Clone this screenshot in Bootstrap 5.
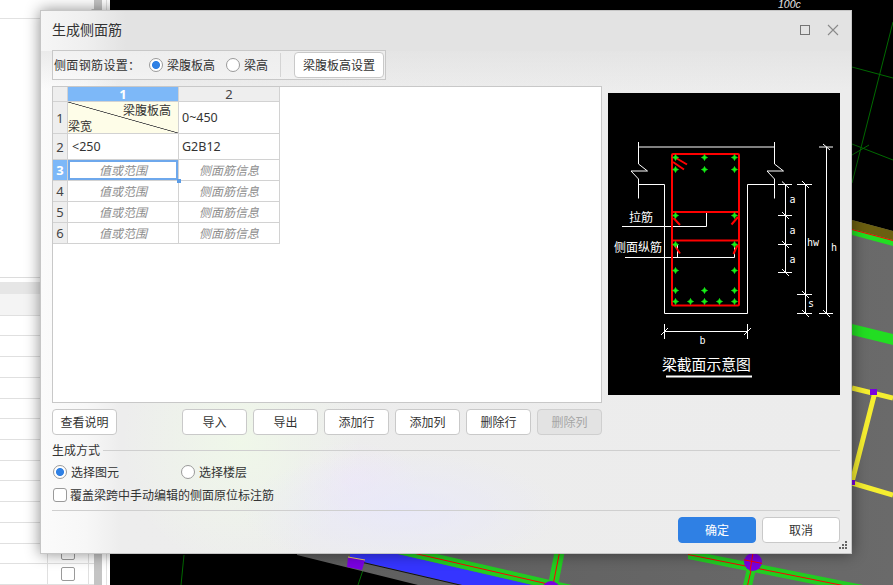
<!DOCTYPE html>
<html lang="zh">
<head>
<meta charset="utf-8">
<title>生成侧面筋</title>
<link href="https://cdn.jsdelivr.net/npm/bootstrap@5.3.0/dist/css/bootstrap.min.css" rel="stylesheet">
<style>
html,body{margin:0;height:585px;width:893px;overflow:hidden;background:#000;}
body{font-family:"Noto Sans CJK SC","Noto Sans",sans-serif;font-size:12px;color:#333;line-height:16px;}
.desk{position:relative;width:893px;height:585px;}
.side{width:110px;height:585px;background:#fff;flex:none;}
.side-table{width:94px;}
.side-search{height:19px;border-bottom:1px solid #e2e2e2;padding:4px 0 0 88px;}
.side-top{height:263px;border-bottom:1px solid #dcdcdc;}
.side-gap{height:4px;}
.side-band{height:12px;background:#e6e6e6;}
.side-head{height:22px;background:#f4f4f4;border-bottom:1px solid #e0e0e0;}
.side-row{height:21px;border-bottom:1px solid #e0e0e0;}
.side-c1{width:48px;border-right:1px solid #e0e0e0;}
.side-c2{width:41px;border-right:1px solid #e0e0e0;}
.side-box{width:14px;height:14px;border:1px solid #9a9a9a;border-radius:2px;background:#fff;}
.side-box-t{margin-top:3px;}
.side-bar{width:8px;background:#c4c4c4;}
.side-gut{width:8px;}
.side-gut i{display:block;width:1px;height:100%;margin-left:4px;background:#e2e2e2;}
.cad{flex:none;display:block;}
.dlg{position:absolute;left:40px;top:10px;width:812px;height:544px;border:1px solid #c6c6c6;
 box-shadow:0 0 14px rgba(0,0,0,.45);
 background:
  linear-gradient(to bottom,rgba(222,222,222,.55) 40px,rgba(222,222,222,0) 78px),
  radial-gradient(ellipse 160px 60px at 360px 500px,rgba(232,232,250,.85),transparent),
  radial-gradient(ellipse 120px 130px at 200px 430px,rgba(240,250,232,.8),transparent),
  radial-gradient(ellipse 70px 40px at 310px 470px,rgba(240,230,250,.6),transparent),
  linear-gradient(to right,#fbfbfb 0,#f7f7f7 45px,#ededed 80px,#ececec 100%);}
.dlg-title{height:40px;margin-bottom:-1px;padding:9px 0 0 11px;font-size:14px;line-height:18px;
 background:linear-gradient(to right,#f6f6f6 0,#efefef 45px,#e3e3e3 85px,#e3e3e3 100%);}
.dlg-ctl{position:absolute;top:13px;right:12px;}
.dlg-body{padding:0 11px;}
.setbar{width:334px;height:30px;border:1px solid #c8c8c8;padding-left:1px;background:rgba(255,255,255,.35);}
.set-label{width:95px;letter-spacing:.35px;}
.rad-ctl{width:14px;height:14px;margin:0;flex:none;background-color:#fff;border:1px solid #9a9a9a;}
.rad-ctl:checked{background-color:#fff;border-color:#9a9a9a;background-image:radial-gradient(circle,#2f80e4 0 3.6px,transparent 4.4px);}
.chk-ctl{width:14px;height:14px;margin:0 0 0 1px;flex:none;background-color:#fff;border:1px solid #9a9a9a;border-radius:2px;}
.set-sep{width:1px;height:24px;background:#d4d4d4;margin:0 13px 0 12px;}
.gap-r{margin-left:4px;}
.gap-ck{margin-left:3px;}
.gap-g1{margin-left:11px;}
.btn-pl{--bs-btn-padding-x:0;--bs-btn-padding-y:0;--bs-btn-font-size:12px;--bs-btn-line-height:24px;--bs-btn-color:#333;--bs-btn-bg:#fff;--bs-btn-border-color:#c9c9c9;--bs-btn-border-radius:4px;--bs-btn-disabled-bg:#e3e3e3;--bs-btn-disabled-border-color:#cfcfcf;--bs-btn-disabled-color:#a6a6a6;--bs-btn-disabled-opacity:1;--bs-btn-hover-bg:#fff;width:65px;height:26px;flex:none;}
.btn-wide{width:90px;}
.btn-main{--bs-btn-padding-x:0;--bs-btn-padding-y:0;--bs-btn-font-size:12px;--bs-btn-line-height:24px;--bs-btn-bg:#2f80e4;--bs-btn-border-color:#2f80e4;--bs-btn-border-radius:4px;--bs-btn-hover-bg:#2f80e4;width:78px;height:26px;}
.btn-sec{width:78px;}
.work{margin-top:6px;height:317px;}
.gridbox{width:550px;height:317px;background:#fff;border:1px solid #c8c8c8;flex:none;}
.preview{width:232px;height:302px;margin:7px 0 0 6px;flex:none;display:block;background:#000;}
.sheet{border-collapse:separate;border-spacing:0;table-layout:fixed;width:227px;font-size:12px;}
.sheet th,.sheet td{padding:0;border-right:1px solid #d2d2d2;border-bottom:1px solid #d2d2d2;vertical-align:middle;font-weight:400;line-height:14px;}
.sheet .hd{background:#eee;text-align:center;font-family:"Noto Sans",sans-serif;font-size:13px;color:#444;}
.sheet .hd-on{background:#7db8f8;color:#fff;font-weight:700;}
.sheet .val{font-family:"Noto Sans",sans-serif;font-size:12.5px;padding-left:3px;}
.sheet .val2{padding-left:3px;}
.sheet .val1{padding-left:4px;}
.sheet .hint{color:#8e8e8e;font-style:italic;text-align:center;}
.sheet .r-h{height:15px;}.sheet .r-a{height:32px;}.sheet .r-b{height:26px;}.sheet .r-c{height:21px;}
.diag{background-color:#fefde8;background-image:linear-gradient(to top right,transparent calc(50% - .7px),#555 calc(50% - .2px),#555 calc(50% + .2px),transparent calc(50% + .7px));}
.diag-a{text-align:right;padding-right:7px;height:16px;line-height:15px;}
.diag-b{height:15px;line-height:15px;}
.cell-on{position:relative;box-shadow:inset 0 0 0 2px #6ea8ec;}
.cell-grab{position:absolute;right:-3px;bottom:-3px;width:4px;height:4px;background:#5b9ce6;}
.ops{margin-top:6px;}
.gap-x6{gap:6px;}
.ml-ops{margin-left:65px;}
.sect{margin-top:7px;}
.sect-line{height:1px;background:#cfcfcf;margin-left:3px;}
.pick{margin-top:7px;height:14px;padding-left:1px;}
.pick-a{width:128px;}
.ck{margin-top:9px;height:14px;}
.rule{height:1px;background:#cfcfcf;margin-top:8px;}
.foot{margin-top:6px;gap:6px;}
.grip{position:absolute;right:3px;bottom:3px;display:block;}
</style>
</head>
<body>
<div class="desk d-flex">
  <div class="side d-flex">
    <div class="side-table d-flex flex-column">
      <div class="side-search"><svg width="10" height="10" viewBox="0 0 10 10" xmlns="http://www.w3.org/2000/svg" aria-hidden="true"><circle cx="5" cy="4.5" r="3.8" fill="none" stroke="#aaa" stroke-width="1"/></svg></div>
      <div class="side-top"></div>
      <div class="side-gap"></div>
      <div class="side-band"></div>
      <div class="side-head"></div>
      <div class="side-row d-flex"><div class="side-c1"></div><div class="side-c2 d-flex justify-content-center align-items-center"><span class="side-box"></span></div></div>
      <div class="side-row d-flex"><div class="side-c1"></div><div class="side-c2"></div></div>
      <div class="side-row d-flex"><div class="side-c1"></div><div class="side-c2"></div></div>
      <div class="side-row d-flex"><div class="side-c1"></div><div class="side-c2"></div></div>
      <div class="side-row d-flex"><div class="side-c1"></div><div class="side-c2"></div></div>
      <div class="side-row d-flex"><div class="side-c1"></div><div class="side-c2"></div></div>
      <div class="side-row d-flex"><div class="side-c1"></div><div class="side-c2"></div></div>
      <div class="side-row d-flex"><div class="side-c1"></div><div class="side-c2"></div></div>
      <div class="side-row d-flex"><div class="side-c1"></div><div class="side-c2"></div></div>
      <div class="side-row d-flex"><div class="side-c1"></div><div class="side-c2"></div></div>
      <div class="side-row d-flex"><div class="side-c1"></div><div class="side-c2"></div></div>
      <div class="side-row d-flex"><div class="side-c1"></div><div class="side-c2 d-flex justify-content-center align-items-center"><span class="side-box"></span></div></div>
      <div class="side-row d-flex"><div class="side-c1"></div><div class="side-c2 d-flex justify-content-center align-items-start"><span class="side-box side-box-t"></span></div></div>
    </div>
    <div class="side-bar"></div>
    <div class="side-gut"><i></i></div>
  </div>

  <svg class="cad" width="783" height="585" viewBox="110 0 783 585" xmlns="http://www.w3.org/2000/svg">
    <rect x="110" y="0" width="783" height="585" fill="#000"/>
    <defs>
      <linearGradient id="gr" x1="0" x2="1" y1="0" y2="0"><stop offset="0" stop-color="#5e5e5e"/><stop offset="1" stop-color="#6a6a6a"/></linearGradient>
    </defs>
    <text x="778" y="8" fill="#fff" font-family="Liberation Sans" font-size="10.5" font-style="italic">100c</text>
    <g stroke="#006a00" stroke-width="1" fill="none">
      <path d="M893 22L852 183M852 67L893 78M852 144L893 160M852 155L869 145"/>
      <path d="M184 555L181 585M368 555L358 585"/>
    </g>
    <polygon points="852,220 893,231 893,585 418,585 297,555 297,200" fill="url(#gr)"/>
    <polygon points="852,220 893,231 893,240 852,229" fill="#6b5f10"/>
    <polygon points="852,229 893,240 893,246 852,235" fill="#22dd22"/>
    <path d="M852 229.5L893 240.5" stroke="#f00" stroke-width="1"/>
    <polygon points="852,324 893,334 893,345 852,335" fill="#22dd22"/>
    <g stroke="#f5ee30" stroke-width="5" fill="none">
      <path d="M852 388L893 398M875 392L852 482M852 483L893 495"/>
    </g>
    <rect x="870" y="389" width="7" height="6" fill="#7a00e0"/>
    <rect x="852" y="480" width="3" height="5" fill="#7a00e0"/>
    <polygon points="350,543 600,600.5 600,617 350,559" fill="#3535ff"/>
    <path d="M350 559.5L600 617.5" stroke="#111" stroke-width="1"/>
    <polygon points="350,534 600,591.5 600,600.5 350,543" fill="#22cc22"/>
    <path d="M350 538.5L600 596" stroke="#f00" stroke-width="1"/>
    <polygon points="348,557 365,560 362,570 347,567" fill="#7a00e0"/>
    <path d="M348 557L365 560" stroke="#e8d060" stroke-width="1"/>
    <path d="M560 550L552 590" stroke="#22cc22" stroke-width="10"/>
    <path d="M560 550L552 590" stroke="#f00" stroke-width="1"/>
    <circle cx="551" cy="590" r="9" fill="#7a00e0"/>
    <polygon points="688,550 893,591 893,600 688,559" fill="#22cc22"/>
    <path d="M688 554.5L893 595.5" stroke="#f00" stroke-width="1"/>
    <path d="M753 562L746 592" stroke="#22cc22" stroke-width="9"/>
    <path d="M753 562L746 592" stroke="#f00" stroke-width="1"/>
    <ellipse cx="753" cy="562" rx="9" ry="9" fill="#7a00e0"/>
    <path d="M744 559.8L762 563.4M753 553L750 571" stroke="#f00" stroke-width="1"/>
  </svg>

  <div class="dlg d-flex flex-column">
    <div class="dlg-title">生成侧面筋</div>
    <svg class="dlg-ctl" width="39" height="12" viewBox="0 0 39 12" xmlns="http://www.w3.org/2000/svg" aria-hidden="true">
      <rect x="0.5" y="1.5" width="9" height="9" fill="none" stroke="#747474" stroke-width="1"/>
      <path d="M28 1L38 11M38 1L28 11" fill="none" stroke="#8a8a8a" stroke-width="1.1"/>
    </svg>
    <div class="dlg-body flex-grow-1 d-flex flex-column">
      <div class="setbar d-flex align-items-center">
        <span class="set-label">侧面钢筋设置：</span>
        <input class="form-check-input rad-ctl" type="radio" name="m1" checked>
        <span class="gap-r">梁腹板高</span>
        <input class="form-check-input rad-ctl gap-g1" type="radio" name="m1">
        <span class="gap-r">梁高</span>
        <span class="set-sep"></span>
        <button type="button" class="btn btn-pl btn-wide">梁腹板高设置</button>
      </div>
      <div class="work d-flex">
        <div class="gridbox">
          <table class="sheet">
            <colgroup><col style="width:15px"><col style="width:111px"><col style="width:101px"></colgroup>
            <tr class="r-h"><th class="hd"></th><th class="hd hd-on">1</th><th class="hd">2</th></tr>
            <tr class="r-a"><th class="hd">1</th><td class="diag"><div class="diag-a">梁腹板高</div><div class="diag-b">梁宽</div></td><td class="val val2">0~450</td></tr>
            <tr class="r-b"><th class="hd">2</th><td class="val val1">&lt;250</td><td class="val val2">G2B12</td></tr>
            <tr class="r-c"><th class="hd hd-on">3</th><td class="hint cell-on">值或范围<span class="cell-grab"></span></td><td class="hint">侧面筋信息</td></tr>
            <tr class="r-c"><th class="hd">4</th><td class="hint">值或范围</td><td class="hint">侧面筋信息</td></tr>
            <tr class="r-c"><th class="hd">5</th><td class="hint">值或范围</td><td class="hint">侧面筋信息</td></tr>
            <tr class="r-c"><th class="hd">6</th><td class="hint">值或范围</td><td class="hint">侧面筋信息</td></tr>
          </table>
        </div>
        <svg class="preview" width="232" height="302" viewBox="608 93 232 302" xmlns="http://www.w3.org/2000/svg">
          <g fill="none" stroke="#fff" stroke-width="1">
            <path d="M638.5 147H774.5"/>
            <path d="M638.5 142V164L647.5 171H631L638.5 179V198.5"/>
            <path d="M774.5 142V164L783.5 171H767L774.5 179V198.5"/>
            <path d="M638.5 184.5H664.5V313.5H747.5V184.5H774.5"/>
            <path d="M622 226.5H706.5V212"/>
            <path d="M625 257.5H734.5V247M677.5 257.5V245"/>
            <path d="M664.5 324V339M747.5 324V339M664.5 331.5H747.5M661 335L668 328M744 335L751 328"/>
            <path d="M785.5 184.5V272.5M778 184.5H792M778 215.5H792M778 244.5H792M778 272.5H792"/>
            <path d="M782 181.5L789 188M782 212L789 219M782 241L789 248M782 269L789 276"/>
            <path d="M805.5 184.5V313.5M797 184.5H812M797 294.5H812M797 313.5H812"/>
            <path d="M802 181L809 188M802 291L809 298M802 310L809 317"/>
            <path d="M826.5 147V313.5M819 147H833M819 313.5H833M823 144L830 150M823 310L830 317"/>
          </g>
          <path d="M666 376.5H752" stroke="#fff" stroke-width="2"/>
          <g fill="none" stroke="#f00" stroke-width="2">
            <rect x="672" y="154" width="67" height="151.5" rx="1"/>
            <path d="M672 212H739M672 240.5H739"/>
            <path d="M676 158L687 164.5M673 162L684 169.5M673.5 218L680 225M738 217L731.5 224.5M674 244.5L680 253.5M737.5 245L733.5 254"/>
          </g>
          <g fill="#16f016" stroke="#16f016" stroke-width=".7">
            <path d="M675.5 154.5l1 2 2 1-2 1-1 2-1-2-2-1 2-1z"/>
            <path d="M704.5 154.5l1 2 2 1-2 1-1 2-1-2-2-1 2-1z"/>
            <path d="M734.5 154.5l1 2 2 1-2 1-1 2-1-2-2-1 2-1z"/>
            <path d="M675.5 166.5l1 2 2 1-2 1-1 2-1-2-2-1 2-1z"/>
            <path d="M704.5 166.5l1 2 2 1-2 1-1 2-1-2-2-1 2-1z"/>
            <path d="M734.5 166.5l1 2 2 1-2 1-1 2-1-2-2-1 2-1z"/>
            <path d="M675.5 212.5l1 2 2 1-2 1-1 2-1-2-2-1 2-1z"/>
            <path d="M734.5 212.5l1 2 2 1-2 1-1 2-1-2-2-1 2-1z"/>
            <path d="M675.5 241.5l1 2 2 1-2 1-1 2-1-2-2-1 2-1z"/>
            <path d="M734.5 241.5l1 2 2 1-2 1-1 2-1-2-2-1 2-1z"/>
            <path d="M675.5 267.5l1 2 2 1-2 1-1 2-1-2-2-1 2-1z"/>
            <path d="M734.5 267.5l1 2 2 1-2 1-1 2-1-2-2-1 2-1z"/>
            <path d="M675.5 287.5l1 2 2 1-2 1-1 2-1-2-2-1 2-1z"/>
            <path d="M704.5 287.5l1 2 2 1-2 1-1 2-1-2-2-1 2-1z"/>
            <path d="M734.5 287.5l1 2 2 1-2 1-1 2-1-2-2-1 2-1z"/>
            <path d="M675.5 298.5l1 2 2 1-2 1-1 2-1-2-2-1 2-1z"/>
            <path d="M690.5 298.5l1 2 2 1-2 1-1 2-1-2-2-1 2-1z"/>
            <path d="M704.5 298.5l1 2 2 1-2 1-1 2-1-2-2-1 2-1z"/>
            <path d="M719.5 298.5l1 2 2 1-2 1-1 2-1-2-2-1 2-1z"/>
            <path d="M734.5 298.5l1 2 2 1-2 1-1 2-1-2-2-1 2-1z"/>
          </g>
          <g fill="#fff" font-family="Noto Sans CJK SC,sans-serif" font-size="12">
            <text x="629" y="222">拉筋</text>
            <text x="614" y="252">侧面纵筋</text>
            <text x="662" y="370" font-size="14.8">梁截面示意图</text>
          </g>
          <g fill="#fff" font-family="DejaVu Sans Mono,monospace" font-size="10">
            <text x="699.5" y="344">b</text>
            <text x="789.5" y="203">a</text>
            <text x="789.5" y="234">a</text>
            <text x="789.5" y="263">a</text>
            <text x="807" y="246" textLength="12">hw</text>
            <text x="808" y="307">s</text>
            <text x="831" y="251">h</text>
          </g>
        </svg>
      </div>
      <div class="ops d-flex">
        <button type="button" class="btn btn-pl">查看说明</button>
        <div class="d-flex gap-x6 ml-ops">
          <button type="button" class="btn btn-pl">导入</button>
          <button type="button" class="btn btn-pl">导出</button>
          <button type="button" class="btn btn-pl">添加行</button>
          <button type="button" class="btn btn-pl">添加列</button>
          <button type="button" class="btn btn-pl">删除行</button>
          <button type="button" class="btn btn-pl" disabled>删除列</button>
        </div>
      </div>
      <div class="sect d-flex align-items-center"><span>生成方式</span><span class="sect-line flex-grow-1"></span></div>
      <div class="pick d-flex align-items-center">
        <div class="pick-a d-flex align-items-center">
          <input class="form-check-input rad-ctl" type="radio" name="m2" checked><span class="gap-r">选择图元</span>
        </div>
        <input class="form-check-input rad-ctl" type="radio" name="m2"><span class="gap-r">选择楼层</span>
      </div>
      <div class="ck d-flex align-items-center">
        <input class="form-check-input chk-ctl" type="checkbox"><span class="gap-ck">覆盖梁跨中手动编辑的侧面原位标注筋</span>
      </div>
      <div class="rule"></div>
      <div class="foot d-flex justify-content-end">
        <button type="button" class="btn btn-primary btn-main">确定</button>
        <button type="button" class="btn btn-pl btn-sec">取消</button>
      </div>
    </div>
    <svg class="grip" width="9" height="9" viewBox="0 0 9 9" xmlns="http://www.w3.org/2000/svg" aria-hidden="true">
      <g fill="#666"><rect x="6" y="0" width="2" height="2"/><rect x="3" y="3" width="2" height="2"/><rect x="6" y="3" width="2" height="2"/><rect x="0" y="6" width="2" height="2"/><rect x="3" y="6" width="2" height="2"/><rect x="6" y="6" width="2" height="2"/></g>
    </svg>
  </div>
</div>
<script src="https://cdn.jsdelivr.net/npm/bootstrap@5.3.0/dist/js/bootstrap.bundle.min.js"></script>
</body>
</html>
